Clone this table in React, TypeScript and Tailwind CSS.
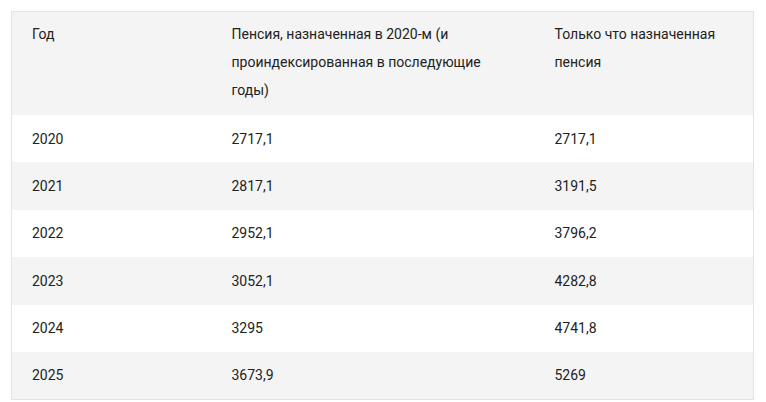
import React from 'react';

const rows: [string, string, string][] = [
  ['2020', '2717,1', '2717,1'],
  ['2021', '2817,1', '3191,5'],
  ['2022', '2952,1', '3796,2'],
  ['2023', '3052,1', '4282,8'],
  ['2024', '3295', '4741,8'],
  ['2025', '3673,9', '5269'],
];

export default function App() {
  return (
    <div className="w-[766px] h-[402px] bg-white pt-[11px] pl-[11px] font-['Roboto',sans-serif] text-[14px] text-[#222]">
      <table className="w-[742px] border-collapse border border-[#e3e3e3] table-fixed">
        <colgroup>
          <col className="w-[200px]" />
          <col className="w-[323px]" />
          <col className="w-[219px]" />
        </colgroup>
        <thead>
          <tr className="bg-[#f4f4f4]">
            <th className="text-left font-normal align-top pl-[20px] pr-[20px] pt-[8px] pb-[11px] leading-[28px]">Год</th>
            <th className="text-left font-normal align-top pl-[20px] pr-[20px] pt-[8px] pb-[11px] leading-[28px]">
              Пенсия, назначенная в 2020-м (и проиндексированная в последующие годы)
            </th>
            <th className="text-left font-normal align-top pl-[20px] pr-[20px] pt-[8px] pb-[11px] leading-[28px]">
              Только что назначенная пенсия
            </th>
          </tr>
        </thead>
        <tbody>
          {rows.map((r, i) => (
            <tr key={r[0]} className={i % 2 === 0 ? 'bg-white h-[47.4px]' : 'bg-[#f4f4f4] h-[47.4px]'}>
              <td className="pl-[20px] pr-[20px] py-0 leading-[28px]">{r[0]}</td>
              <td className="pl-[20px] pr-[20px] py-0 leading-[28px]">{r[1]}</td>
              <td className="pl-[20px] pr-[20px] py-0 leading-[28px]">{r[2]}</td>
            </tr>
          ))}
        </tbody>
      </table>
    </div>
  );
}
